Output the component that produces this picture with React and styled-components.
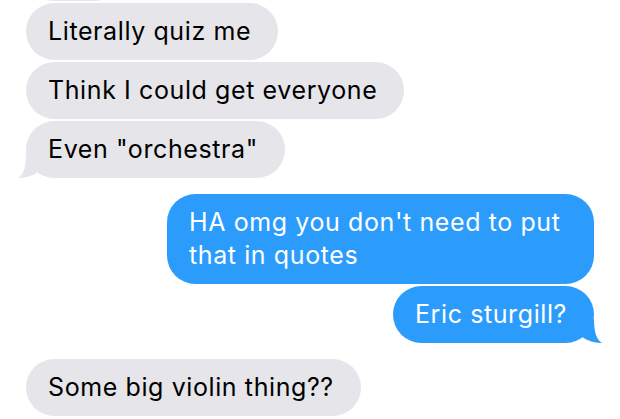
import React from 'react'
import styled, { createGlobalStyle } from 'styled-components'

const GlobalStyle = createGlobalStyle`
  html, body {
    margin: 0;
    padding: 0;
    background: #ffffff;
  }
  body {
    font-family: Inter, "Liberation Sans", Arial, sans-serif;
    -webkit-font-smoothing: antialiased;
  }
`

const messages = [
  { from: 'them', text: 'Literally quiz me' },
  { from: 'them', text: 'Think I could get everyone' },
  { from: 'them', text: 'Even "orchestra"', tail: true },
  { from: 'me', text: "HA omg you don't need to put that in quotes", gap: true },
  { from: 'me', text: 'Eric sturgill?', tail: true },
  { from: 'them', text: 'Some big violin thing??', gap: true }
]

const Tail = ({ mine }) => (
  <TailSvg mine={mine ? 1 : 0} width="20" height="24" viewBox="0 0 20 24">
    <path d="M8 0 C8 14 5 21 0 24 C6 24.2 14 22 19 18.5 L19 0 Z" />
  </TailSvg>
)

const App = () => (
  <>
    <GlobalStyle />
    <Thread>
      {/* bottom edge of the previous message, scrolled off the top */}
      <Row>
        <Sliver />
      </Row>
      {messages.map((m, i) => (
        <Row key={i} mine={m.from === 'me' ? 1 : 0} gap={m.gap ? 1 : 0}>
          <Bubble mine={m.from === 'me' ? 1 : 0}>
            {m.text}
            {m.tail && <Tail mine={m.from === 'me'} />}
          </Bubble>
        </Row>
      ))}
    </Thread>
  </>
)

const Thread = styled.div`
  width: 620px;
  height: 419px;
  overflow: hidden;
  box-sizing: border-box;
  padding: 0 26px;
  display: flex;
  flex-direction: column;
  gap: 2px;
`

const Row = styled.div`
  display: flex;
  justify-content: ${({ mine }) => (mine ? 'flex-end' : 'flex-start')};
  margin-top: ${({ gap }) => (gap ? '14px' : '0')};
`

const Sliver = styled.div`
  width: 96px;
  height: 57px;
  margin-top: -56px;
  border-radius: 28.5px;
  background: #e5e5ea;
`

const Bubble = styled.div`
  position: relative;
  max-width: 427px;
  box-sizing: border-box;
  padding: 12px 27px 12px 22px;
  border-radius: 28.5px;
  font-size: 25px;
  line-height: 33px;
  letter-spacing: 0.6px;
  background: ${({ mine }) => (mine ? '#2b9cfc' : '#e5e5ea')};
  color: ${({ mine }) => (mine ? '#ffffff' : '#000000')};
`

const TailSvg = styled.svg`
  position: absolute;
  bottom: 0;
  ${({ mine }) => (mine ? 'right: -8px; transform: scaleX(-1);' : 'left: -8px;')}
  fill: ${({ mine }) => (mine ? '#2b9cfc' : '#e5e5ea')};
`

export default App
